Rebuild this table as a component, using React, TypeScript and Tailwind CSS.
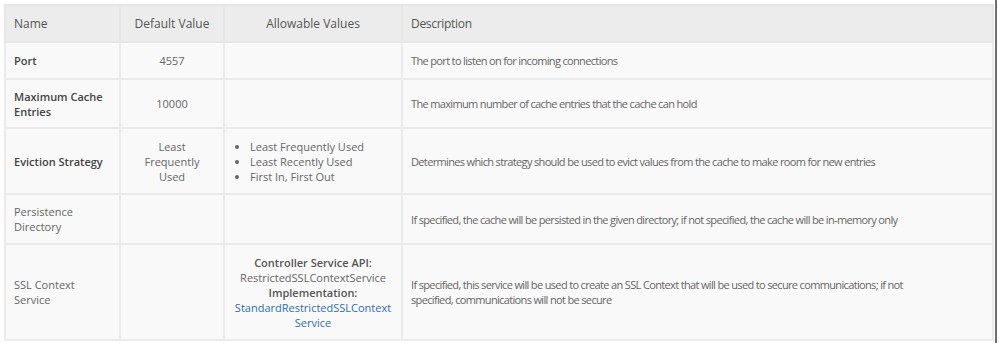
// Controller service property table
type Row = {
  name: string;
  required?: boolean;
  def?: React.ReactNode;
  allowed?: React.ReactNode;
  desc: string;
  h: string;
};

const rows: Row[] = [
  { name: 'Port', required: true, def: '4557', desc: 'The port to listen on for incoming connections', h: 'h-[37px]' },
  {
    name: 'Maximum Cache Entries',
    required: true,
    def: '10000',
    desc: 'The maximum number of cache entries that the cache can hold',
    h: 'h-[49px]',
  },
  {
    name: 'Eviction Strategy',
    required: true,
    def: 'Least Frequently Used',
    allowed: (
      <ul className="list-disc pl-[17px] text-left">
        <li>Least Frequently Used</li>
        <li>Least Recently Used</li>
        <li>First In, First Out</li>
      </ul>
    ),
    desc: 'Determines which strategy should be used to evict values from the cache to make room for new entries',
    h: 'h-[66px]',
  },
  {
    name: 'Persistence Directory',
    desc: 'If specified, the cache will be persisted in the given directory; if not specified, the cache will be in-memory only',
    h: 'h-[50px]',
  },
  {
    name: 'SSL Context Service',
    allowed: (
      <div className="text-center">
        <div className="font-semibold text-[#555]">Controller Service API:</div>
        <div>RestrictedSSLContextService</div>
        <div className="font-semibold text-[#555]">Implementation:</div>
        <div className="text-[#2f6db5]">
          StandardRestrictedSSLContext<wbr />Service
        </div>
      </div>
    ),
    desc: 'If specified, this service will be used to create an SSL Context that will be used to secure communications; if not specified, communications will not be secure',
    h: 'h-[96px]',
  },
];

export default function App() {
  return (
    <div className="min-h-screen bg-white">
      <div className="w-[997px] h-[343px] border-r-2 border-[#6f6f6f] pt-[4px] pl-[4px]">
        <table
          className="w-[990px] table-fixed border-collapse border border-[#d9d9d9] text-[11px] leading-[15px] text-[#666]"
          style={{ fontFamily: '"Open Sans", "Liberation Sans", sans-serif' }}
        >
          <colgroup>
            <col className="w-[115px]" />
            <col className="w-[104px]" />
            <col className="w-[178px]" />
            <col />
          </colgroup>
          <thead>
            <tr className="h-[37px] bg-[#ececec] text-[12px] text-[#555]">
              <th className="border-2 border-[#e6e6e6] px-[8px] text-left font-normal">Name</th>
              <th className="border-2 border-[#e6e6e6] px-[8px] text-center font-normal">Default Value</th>
              <th className="border-2 border-[#e6e6e6] px-[8px] text-center font-normal">Allowable Values</th>
              <th className="border-2 border-[#e6e6e6] px-[8px] text-left font-normal tracking-[-0.3px]">
                Description
              </th>
            </tr>
          </thead>
          <tbody>
            {rows.map((r) => (
              <tr key={r.name} className={`${r.h} bg-[#f9f9f9]`}>
                <td
                  className={`border-2 border-[#ebebeb] px-[8px] py-[4px] align-middle ${
                    r.required ? 'font-semibold text-[#444]' : ''
                  }`}
                >
                  {r.name}
                </td>
                <td className="border-2 border-[#ebebeb] px-[12px] py-[4px] text-center align-middle">{r.def}</td>
                <td className="border-2 border-[#ebebeb] px-[8px] py-[4px] align-middle">{r.allowed}</td>
                <td className="border-2 border-[#ebebeb] px-[8px] py-[4px] align-middle tracking-[-0.65px]">
                  <div className="max-w-[505px]">{r.desc}</div>
                </td>
              </tr>
            ))}
          </tbody>
        </table>
      </div>
    </div>
  );
}
